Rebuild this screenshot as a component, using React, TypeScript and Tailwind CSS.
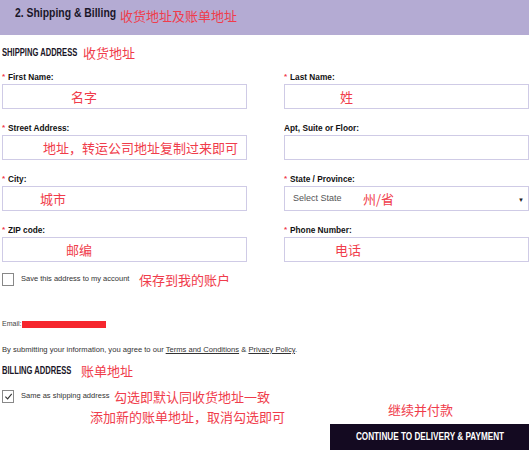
import React from 'react';

const CN = "font-['Noto_Sans_CJK_SC',sans-serif] text-[13px] leading-none text-[#f03c4b]";

interface FieldProps {
    label: string;
    required?: boolean;
    note?: string;
    notePad?: string;
    select?: boolean;
}

const Field: React.FC<FieldProps> = ({ label, required, note, notePad, select }) => (
    <div className="flex flex-col">
        <div className="h-[12px] flex items-center text-[9px] leading-none font-bold text-[#111] font-['Liberation_Sans',sans-serif]">
            {required && <span className="text-[#f03c4b] mr-[3px] text-[8px]">*</span>}
            <span className="inline-block origin-left scale-x-[0.92] whitespace-nowrap">{label}</span>
        </div>
        <div className="mt-[1px] h-[25px] border border-[#cfcbe6] bg-white flex items-center relative">
            {select && (
                <span className="pl-[8px] text-[9px] text-[#555] font-['Liberation_Sans',sans-serif] w-[78px]">Select State</span>
            )}
            {note && <span className={`${CN} ${notePad ?? ''}`}>{note}</span>}
            {select && <span className="absolute right-[4px] top-[9px] text-[6px] text-[#222]">▼</span>}
        </div>
    </div>
);

const Check: React.FC<{ checked?: boolean }> = ({ checked }) => (
    <div className="w-[12px] h-[13px] border border-[#888] bg-white flex items-center justify-center shrink-0">
        {checked && (
            <svg width="9" height="9" viewBox="0 0 10 10">
                <path d="M1.5 5.2 L4 7.6 L8.6 2" fill="none" stroke="#333" strokeWidth="1.2" />
            </svg>
        )}
    </div>
);

export default function App() {
    return (
        <div className="w-[532px] h-[452px] bg-white overflow-hidden font-['Liberation_Sans',sans-serif]">
            {/* Header */}
            <div className="w-[529px] h-[35px] bg-[#b4abd3] flex items-start pt-[5px] pl-[15px]">
                <span className="inline-block origin-left scale-x-[0.8] w-[105px] whitespace-nowrap text-[13px] leading-[16px] font-bold text-[#1a1628]">2. Shipping &amp; Billing</span>
                <span className={`${CN} mt-[4px]`}>收货地址及账单地址</span>
            </div>

            <div className="pl-[2px] w-[529px]">
                <div className="flex items-center h-[20px] mt-[7px]">
                    <span className="inline-block origin-left scale-x-[0.76] w-[81px] whitespace-nowrap text-[10px] font-bold text-[#1a1628]">SHIPPING ADDRESS</span>
                    <span className={CN}>收货地址</span>
                </div>

                <div className="grid grid-cols-2 gap-x-[37px] gap-y-[13px] mt-[9px]">
                    <Field label="First Name:" required note="名字" notePad="pl-[68px]" />
                    <Field label="Last Name:" required note="姓" notePad="pl-[55px]" />
                    <Field label="Street Address:" required note="地址，转运公司地址复制过来即可" notePad="pl-[40px]" />
                    <Field label="Apt, Suite or Floor:" />
                    <Field label="City:" required note="城市" notePad="pl-[37px]" />
                    <Field label="State / Province:" required select note="州/省" />
                    <Field label="ZIP code:" required note="邮编" notePad="pl-[63px]" />
                    <Field label="Phone Number:" required note="电话" notePad="pl-[50px]" />
                </div>

                <div className="flex items-center mt-[10px] h-[14px]">
                    <Check />
                    <span className="ml-[7px] w-[118px] text-[7.5px] text-[#333] whitespace-nowrap">Save this address to my account</span>
                    <span className={CN}>保存到我的账户</span>
                </div>

                <div className="flex items-center mt-[33px] h-[10px]">
                    <span className="text-[7px] text-[#444]">Email:</span>
                    <div className="ml-[1px] w-[84px] h-[7px] bg-[#f6262e]" />
                </div>

                <div className="mt-[16px] text-[7.6px] leading-[10px] text-[#333] whitespace-nowrap">
                    By submitting your information, you agree to our <span className="underline">Terms and Conditions</span> &amp; <span className="underline">Privacy Policy</span>.
                </div>

                <div className="flex items-center h-[16px] mt-[7px]">
                    <span className="inline-block origin-left scale-x-[0.76] w-[79px] whitespace-nowrap text-[10px] font-bold text-[#1a1628]">BILLING ADDRESS</span>
                    <span className={CN}>账单地址</span>
                </div>

                <div className="flex items-center mt-[11px] h-[14px]">
                    <Check checked />
                    <span className="ml-[7px] w-[93px] text-[7.5px] text-[#333] whitespace-nowrap">Same as shipping address</span>
                    <span className={CN}>勾选即默认同收货地址一致</span>
                </div>

                <div className="flex items-start">
                    <span className={`${CN} ml-[88px] mt-[7px]`}>添加新的账单地址，取消勾选即可</span>
                    <span className={`${CN} ml-[103px]`}>继续并付款</span>
                </div>

                <div className="flex justify-end mt-[1px]">
                    <div className="w-[199px] h-[26px] bg-[#140a21] flex items-center justify-center">
                        <span className="inline-block scale-x-[0.78] whitespace-nowrap text-[10.5px] font-bold text-white">CONTINUE TO DELIVERY &amp; PAYMENT</span>
                    </div>
                </div>
            </div>
        </div>
    );
}
